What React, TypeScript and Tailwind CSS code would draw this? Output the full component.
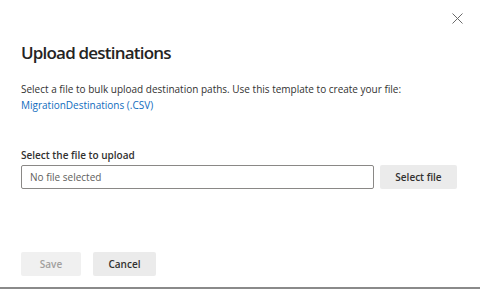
import React from "react";

export default function App() {
  return (
    <div
      className="relative w-[480px] h-[289px] bg-white border-b-2 border-[#8a8a8a] overflow-hidden"
      style={{ fontFamily: '"Open Sans", "Noto Sans", Arial, sans-serif' }}
    >
      <button className="absolute right-[17px] top-[12px] w-[12px] h-[12px] flex items-center justify-center text-[#605e5c]">
        <svg width="11" height="11" viewBox="0 0 11 11" fill="none">
          <path d="M0.5 0.5 L10.5 10.5 M10.5 0.5 L0.5 10.5" stroke="#6a6a6a" strokeWidth="1" />
        </svg>
      </button>
      <div className="flex flex-col pl-[21px] pr-[23px] pt-[40px]">
        <h1 className="text-[17px] leading-[26px] font-semibold text-[#252423] tracking-[-0.8px]">
          Upload destinations
        </h1>
        <p className="mt-[15px] text-[10px] leading-[16px] text-[#323130]">
          Select a file to bulk upload destination paths. Use this template to create your file:
          <br />
          <a className="text-[#0f6cbd]">MigrationDestinations (.CSV)</a>
        </p>
        <label className="mt-[35px] text-[10px] leading-[14px] font-semibold text-[#323130]">
          Select the file to upload
        </label>
        <div className="mt-[3px] flex gap-[6px]">
          <div className="w-[353px] h-[24px] border border-[#8a8886] rounded-[2px] px-[8px] flex items-center text-[10px] text-[#605e5c]">
            No file selected
          </div>
          <button className="w-[77px] h-[24px] bg-[#ebebeb] rounded-[2px] text-[10px] font-semibold text-[#323130]">
            Select file
          </button>
        </div>
        <div className="mt-[63px] flex gap-[12px]">
          <button className="w-[60px] h-[24px] bg-[#f0f0f0] rounded-[2px] text-[10px] font-semibold text-[#a19f9d]">
            Save
          </button>
          <button className="w-[63px] h-[24px] bg-[#ebebeb] rounded-[2px] text-[10px] font-semibold text-[#323130]">
            Cancel
          </button>
        </div>
      </div>
    </div>
  );
}
